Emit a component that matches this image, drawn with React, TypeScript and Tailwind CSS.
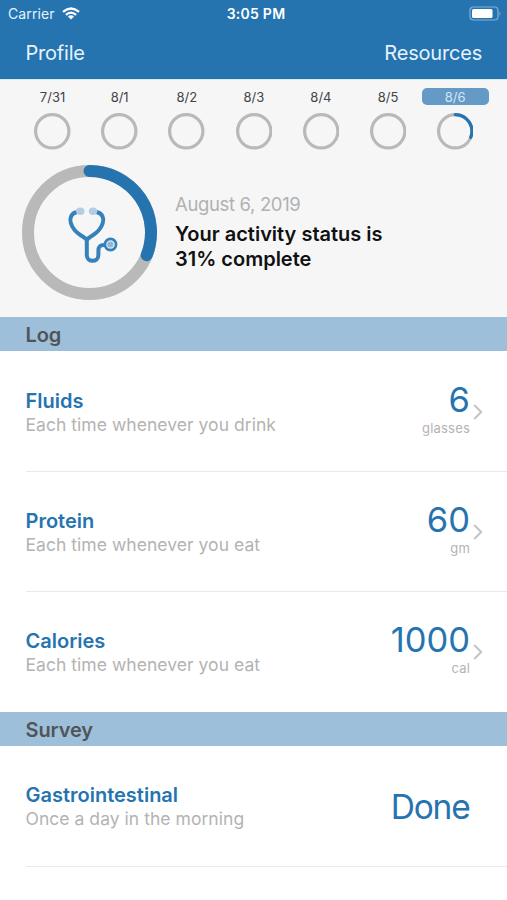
const days = ['7/31', '8/1', '8/2', '8/3', '8/4', '8/5', '8/6'];

function Ring({ size, stroke, value }: { size: number; stroke: number; value: number }) {
  const r = (size - stroke) / 2;
  const c = size / 2;
  const a = value * 2 * Math.PI;
  return (
    <svg width={size} height={size} viewBox={`0 0 ${size} ${size}`} fill="none" strokeWidth={stroke} className="block">
      <circle cx={c} cy={c} r={r} stroke="#b9b9b9" />
      {value > 0 && (
        <path
          d={`M${c} ${c - r}A${r} ${r} 0 0 1 ${c + r * Math.sin(a)} ${c - r * Math.cos(a)}`}
          stroke="#2574b0"
          strokeLinecap="round"
        />
      )}
    </svg>
  );
}

function Stethoscope() {
  return (
    <svg width="52" height="58" viewBox="66 205 52 58" fill="none" stroke="#3581b9" strokeWidth="4" strokeLinecap="round" strokeLinejoin="round">
      <path d="M76.5 212.2C71.5 213 69.300 218 70.800 223C72.300 228 77 233 81 235.500C83 236.800 85.500 238 86.800 240C88 238 90.500 236.800 92.500 235.500C96.500 233 101.300 228 102.800 223C104.300 218 102 213 97 212.200" />
      <path d="M86.800 240V255C86.800 262.800 98.400 262.800 98.400 255V251C98.400 247 99.500 245 104 245" />
      <circle cx="110.500" cy="244.500" r="5.600" fill="#dce9f4" strokeWidth="2.600" />
      <circle cx="110.300" cy="244.500" r="2.900" fill="#8fb5d8" stroke="none" />
      <ellipse cx="80.300" cy="211.200" rx="4.200" ry="3.700" fill="#b4cde4" stroke="none" />
      <ellipse cx="93" cy="211.200" rx="4.200" ry="3.700" fill="#b4cde4" stroke="none" />
    </svg>
  );
}

function SectionBar({ title }: { title: string }) {
  return (
    <h2 className="mb-px flex h-[34px] items-center bg-[#9ebfda] pl-[25.5px] pt-[2px] text-[20px] font-semibold leading-6 tracking-[-0.1px] text-[#505458]">
      {title}
    </h2>
  );
}

type RowProps = { title: string; note: string; value: string; unit?: string; line?: boolean };

function Row({ title, note, value, unit, line }: RowProps) {
  return (
    <div className="ml-[25.5px] flex h-[120px] flex-col">
      <div className="flex flex-1 justify-between">
        <div className={unit ? 'pt-[37px]' : 'pt-[36px]'}>
          <div className="text-[20px] font-semibold leading-6 text-[#2574b0]">{title}</div>
          <div className="text-[17.5px] leading-[23px] tracking-[0.04px] text-[#b3b3b3]">{note}</div>
        </div>
        {unit ? (
          <div className="flex">
            <div className="pt-[27px] text-right">
              <div className="text-[34.5px] leading-[41px] text-[#2574b0]">{value}</div>
              <div className="text-[13px] leading-4 tracking-[0.2px] text-[#b3b3b3]">{unit}</div>
            </div>
            <svg width="10" height="16" viewBox="0 0 10 16" fill="none" stroke="#c4c4c6" strokeWidth="2" className="ml-[3px] mr-[24px] mt-[52px]">
              <path d="M1.200 1L8.200 8L1.200 15" />
            </svg>
          </div>
        ) : (
          <div className="pr-[37.5px] pt-[39px] text-[33.5px] leading-[42px] tracking-[-1.2px] text-[#2574b0]">{value}</div>
        )}
      </div>
      {line && <div className="h-px bg-[#e9e9ea]" />}
    </div>
  );
}

export default function App() {
  return (
    <div className="h-[900px] w-[507px] overflow-hidden bg-white font-['Inter',sans-serif]">
      <header className="h-[79px] bg-[#2574b0] text-[#e6f2fc]">
        <div className="grid h-[28px] grid-cols-3 items-center pl-2 pr-[5px] text-[14px] leading-[18px]">
          <div className="flex items-center gap-[7px]">
            <span className="tracking-[0.1px]">Carrier</span>
            <svg width="18" height="13" viewBox="0 0 18 13" fill="none" stroke="#ffffff" strokeWidth="2.300" className="-mt-[2px]">
              <path d="M1 4.800Q9 -1.900 17 4.800M3.900 7.800Q9 3.400 14.100 7.800" />
              <path d="M5.900 9.500Q9 7 12.100 9.500L9 12.600Z" fill="#ffffff" stroke="none" />
            </svg>
          </div>
          <div className="pl-[2px] text-center font-semibold tracking-[0.25px] text-white">3:05 PM</div>
          <svg width="33" height="15" viewBox="0 0 33 15" fill="none" className="-mt-[2px] justify-self-end">
            <rect x="1" y="1" width="28" height="13" rx="3.500" stroke="#85afd2" strokeWidth="1.200" />
            <rect x="3" y="3" width="20.500" height="9" rx="1.500" fill="#fff" />
            <path d="M30.500 5.200Q32.500 7.500 30.500 9.800Z" fill="#85afd2" />
          </svg>
        </div>
        <nav className="flex justify-between pl-[25.5px] pr-[25px] pt-[12.5px] text-[20px] leading-6 tracking-[-0.2px]">
          <span>Profile</span>
          <span>Resources</span>
        </nav>
      </header>
      <section className="h-[238px] border-t border-[#d5ebf7] bg-[#f6f6f7]">
        <div className="flex pl-[19px] pt-2">
          {days.map((day, i) => (
            <div key={day} className="flex w-[67.1px] flex-col items-center">
              <div className={`h-[17px] w-full rounded-[5px] text-center text-[13px] leading-[18px] ${i === 6 ? 'bg-[#659ac7] text-[#d3e5f3]' : 'text-[#444]'}`}>
                {day}
              </div>
              <div className="mt-2">
                <Ring size={36.5} stroke={3.2} value={i === 6 ? 0.31 : 0} />
              </div>
            </div>
          ))}
        </div>
        <div className="flex pl-[22px] pt-[15.5px]">
          <div className="grid h-[135px] w-[135px] place-items-center *:col-start-1 *:row-start-1">
            <Ring size={135} stroke={12} value={0.31} />
            <div className="pl-[5px] pt-[3px]">
              <Stethoscope />
            </div>
          </div>
          <div className="ml-[18px] pt-[27px]">
            <div className="text-[18.5px] leading-6 tracking-[-0.35px] text-[#b1b1b3]">August 6, 2019</div>
            <div className="mt-[6px] w-[240px] text-[20px] font-semibold leading-[24.5px] text-[#111]">
              Your activity status is<br />31% complete
            </div>
          </div>
        </div>
      </section>
      <SectionBar title="Log" />
      <Row title="Fluids" note="Each time whenever you drink" value="6" unit="glasses" line />
      <Row title="Protein" note="Each time whenever you eat" value="60" unit="gm" line />
      <Row title="Calories" note="Each time whenever you eat" value="1000" unit="cal" />
      <SectionBar title="Survey" />
      <Row title="Gastrointestinal" note="Once a day in the morning" value="Done" line />
    </div>
  );
}
